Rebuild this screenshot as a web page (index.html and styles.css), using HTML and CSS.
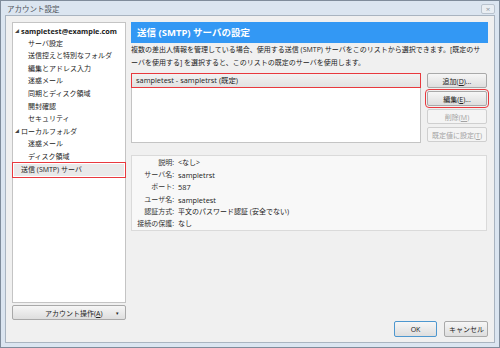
FILE: index.html
```html
<!DOCTYPE html>
<html lang="ja">
<head>
    <meta charset="UTF-8">
    <title>アカウント設定</title>
    <link rel="stylesheet" href="styles.css">
</head>
<body>
    <div class="window">
        <div class="titlebar">
            <span class="title">アカウント設定</span>
            <span class="close-btn">×</span>
        </div>

        <div class="client">
            <div class="sidebar">
                <ul class="tree">
                    <li class="tree-root"><span class="twisty">◢</span>sampletest@example.com</li>
                    <li class="tree-child">サーバ設定</li>
                    <li class="tree-child">送信控えと特別なフォルダ</li>
                    <li class="tree-child">編集とアドレス入力</li>
                    <li class="tree-child">迷惑メール</li>
                    <li class="tree-child">同期とディスク領域</li>
                    <li class="tree-child">開封確認</li>
                    <li class="tree-child">セキュリティ</li>
                    <li class="tree-folder"><span class="twisty">◢</span>ローカルフォルダ</li>
                    <li class="tree-child">迷惑メール</li>
                    <li class="tree-child">ディスク領域</li>
                    <li class="tree-smtp selected">送信 (SMTP) サーバ</li>
                </ul>
                <button class="btn account-btn">
                    <span>アカウント操作(<u>A</u>)</span>
                    <span class="drop">▾</span>
                </button>
            </div>

            <div class="main">
                <div class="page-header">送信 (SMTP) サーバの設定</div>
                <p class="desc">複数の差出人情報を管理している場合、使用する送信 (SMTP) サーバをこのリストから選択できます。[既定のサーバを使用する] を選択すると、このリストの既定のサーバを使用します。</p>

                <div class="server-row">
                    <div class="server-list">
                        <div class="server-item selected">sampletest - sampletrst (既定)</div>
                    </div>
                    <div class="server-buttons">
                        <button class="btn">追加(<u>D</u>)...</button>
                        <button class="btn marked">編集(<u>E</u>)...</button>
                        <button class="btn" disabled>削除(<u>M</u>)</button>
                        <button class="btn" disabled>既定値に設定(<u>T</u>)</button>
                    </div>
                </div>

                <div class="details">
                    <div class="detail-row"><span class="detail-label">説明:</span><span>&lt;なし&gt;</span></div>
                    <div class="detail-row"><span class="detail-label">サーバ名:</span><span class="latin">sampletrst</span></div>
                    <div class="detail-row"><span class="detail-label">ポート:</span><span class="latin">587</span></div>
                    <div class="detail-row"><span class="detail-label">ユーザ名:</span><span class="latin">sampletest</span></div>
                    <div class="detail-row"><span class="detail-label">認証方式:</span><span>平文のパスワード認証 (安全でない)</span></div>
                    <div class="detail-row"><span class="detail-label">接続の保護:</span><span>なし</span></div>
                </div>

                <div class="footer">
                    <button class="btn ok-btn">OK</button>
                    <button class="btn cancel-btn">キャンセル</button>
                </div>
            </div>
        </div>
    </div>
</body>
</html>
```

FILE: styles.css
```css
* {
    box-sizing: border-box;
}

body {
    margin: 0;
    font-family: "Open Sans", "Noto Sans CJK JP", sans-serif;
    font-size: 7px;
    color: #222;
    background: #fff;
}

ul {
    margin: 0;
    padding: 0;
    list-style: none;
}

u {
    text-decoration: underline;
}

.latin {
    font-size: 7.4px;
}

.window {
    width: 500px;
    height: 348px;
    background: #dbe5f0;
    border: 1px solid #7f8c9b;
    display: flex;
    flex-direction: column;
}

.titlebar {
    height: 14px;
    display: flex;
    justify-content: space-between;
    align-items: center;
    padding: 0 4px 0 6px;
}

.title {
    color: #4f545b;
    font-size: 7.5px;
}

.close-btn {
    width: 14px;
    height: 10px;
    margin-top: 1px;
    border: 1px solid #b9c3ce;
    border-radius: 2px;
    background: #e9eef3;
    color: #8d96a0;
    font-size: 8px;
    line-height: 8px;
    text-align: center;
}

.client {
    flex: 1;
    margin: 0 4px 4px;
    background: #f0f0f0;
    border: 1px solid #a9b4c0;
    display: flex;
    gap: 5px;
    padding: 6px 6px 5px 6px;
}

/* left tree */
.sidebar {
    width: 114px;
    height: 298px;
    display: flex;
    flex-direction: column;
}

.tree {
    height: 281px;
    background: #fff;
    border: 1px solid #c4c4c4;
    padding: 2px 1px;
}

.tree li {
    height: 12.6px;
    line-height: 12.6px;
    white-space: nowrap;
}

.tree-root {
    font-weight: bold;
    font-size: 7.3px;
    padding-left: 1px;
}

.tree-folder {
    padding-left: 1px;
}

.twisty {
    display: inline-block;
    width: 6px;
    font-size: 4px;
    color: #444;
    vertical-align: 1px;
}

.tree-child {
    padding-left: 14px;
}

.tree-smtp {
    padding-left: 7px;
}

.tree li.selected {
    background: #e9e9e9;
    outline: 1px solid #e8393e;
    outline-offset: 1px;
}

.btn {
    font-family: inherit;
    font-size: 7px;
    color: #222;
    height: 15px;
    padding: 0 4px;
    border: 1px solid #a9a9a9;
    border-radius: 2px;
    background: linear-gradient(#f6f6f6, #dedede);
    white-space: nowrap;
}

.btn:disabled {
    color: #a3a3a3;
    border-color: #cfcfcf;
    background: #f4f4f4;
}

.account-btn {
    margin-top: 2px;
    display: flex;
    justify-content: space-between;
    align-items: center;
    padding: 0 6px 0 32px;
}

.drop {
    font-size: 5px;
}

/* right panel */
.main {
    flex: 1;
    display: flex;
    flex-direction: column;
}

.page-header {
    height: 21px;
    background: #3398f4;
    color: #fff;
    font-weight: bold;
    font-size: 9.5px;
    line-height: 21px;
    padding-left: 6px;
}

.desc {
    margin: 0;
    line-height: 13px;
    padding-right: 4px;
}

.server-row {
    display: flex;
    gap: 6px;
    margin-top: 4px;
}

.server-list {
    width: 290px;
    height: 70px;
    background: #fff;
    border: 1px solid #c4c4c4;
}

.server-item {
    height: 15px;
    line-height: 13px;
    padding-left: 4px;
    font-size: 7.4px;
}

.server-item.selected {
    background: linear-gradient(#f2f2f2, #e2e2e2);
    border: 1px solid #e8393e;
    margin: -1px;
}

.server-buttons {
    width: 60px;
    display: flex;
    flex-direction: column;
    gap: 3px;
}

.server-buttons .btn {
    width: 60px;
}

.btn.marked {
    outline: 1px solid #e8393e;
    outline-offset: 1px;
}

.details {
    margin-top: 12px;
    width: 356px;
    height: 76px;
    background: #f8f8f8;
    border: 1px solid #dadada;
    padding-top: 0.5px;
}

.detail-row {
    display: flex;
    gap: 4px;
    height: 12.4px;
    line-height: 12.4px;
}

.detail-label {
    width: 42px;
    text-align: right;
    color: #333;
}

.footer {
    margin-top: auto;
    display: flex;
    justify-content: flex-end;
    gap: 7px;
}

.footer .btn {
    height: 16px;
}

.ok-btn {
    width: 43px;
    border-color: #4d97cf;
}

.cancel-btn {
    width: 44px;
}
```
